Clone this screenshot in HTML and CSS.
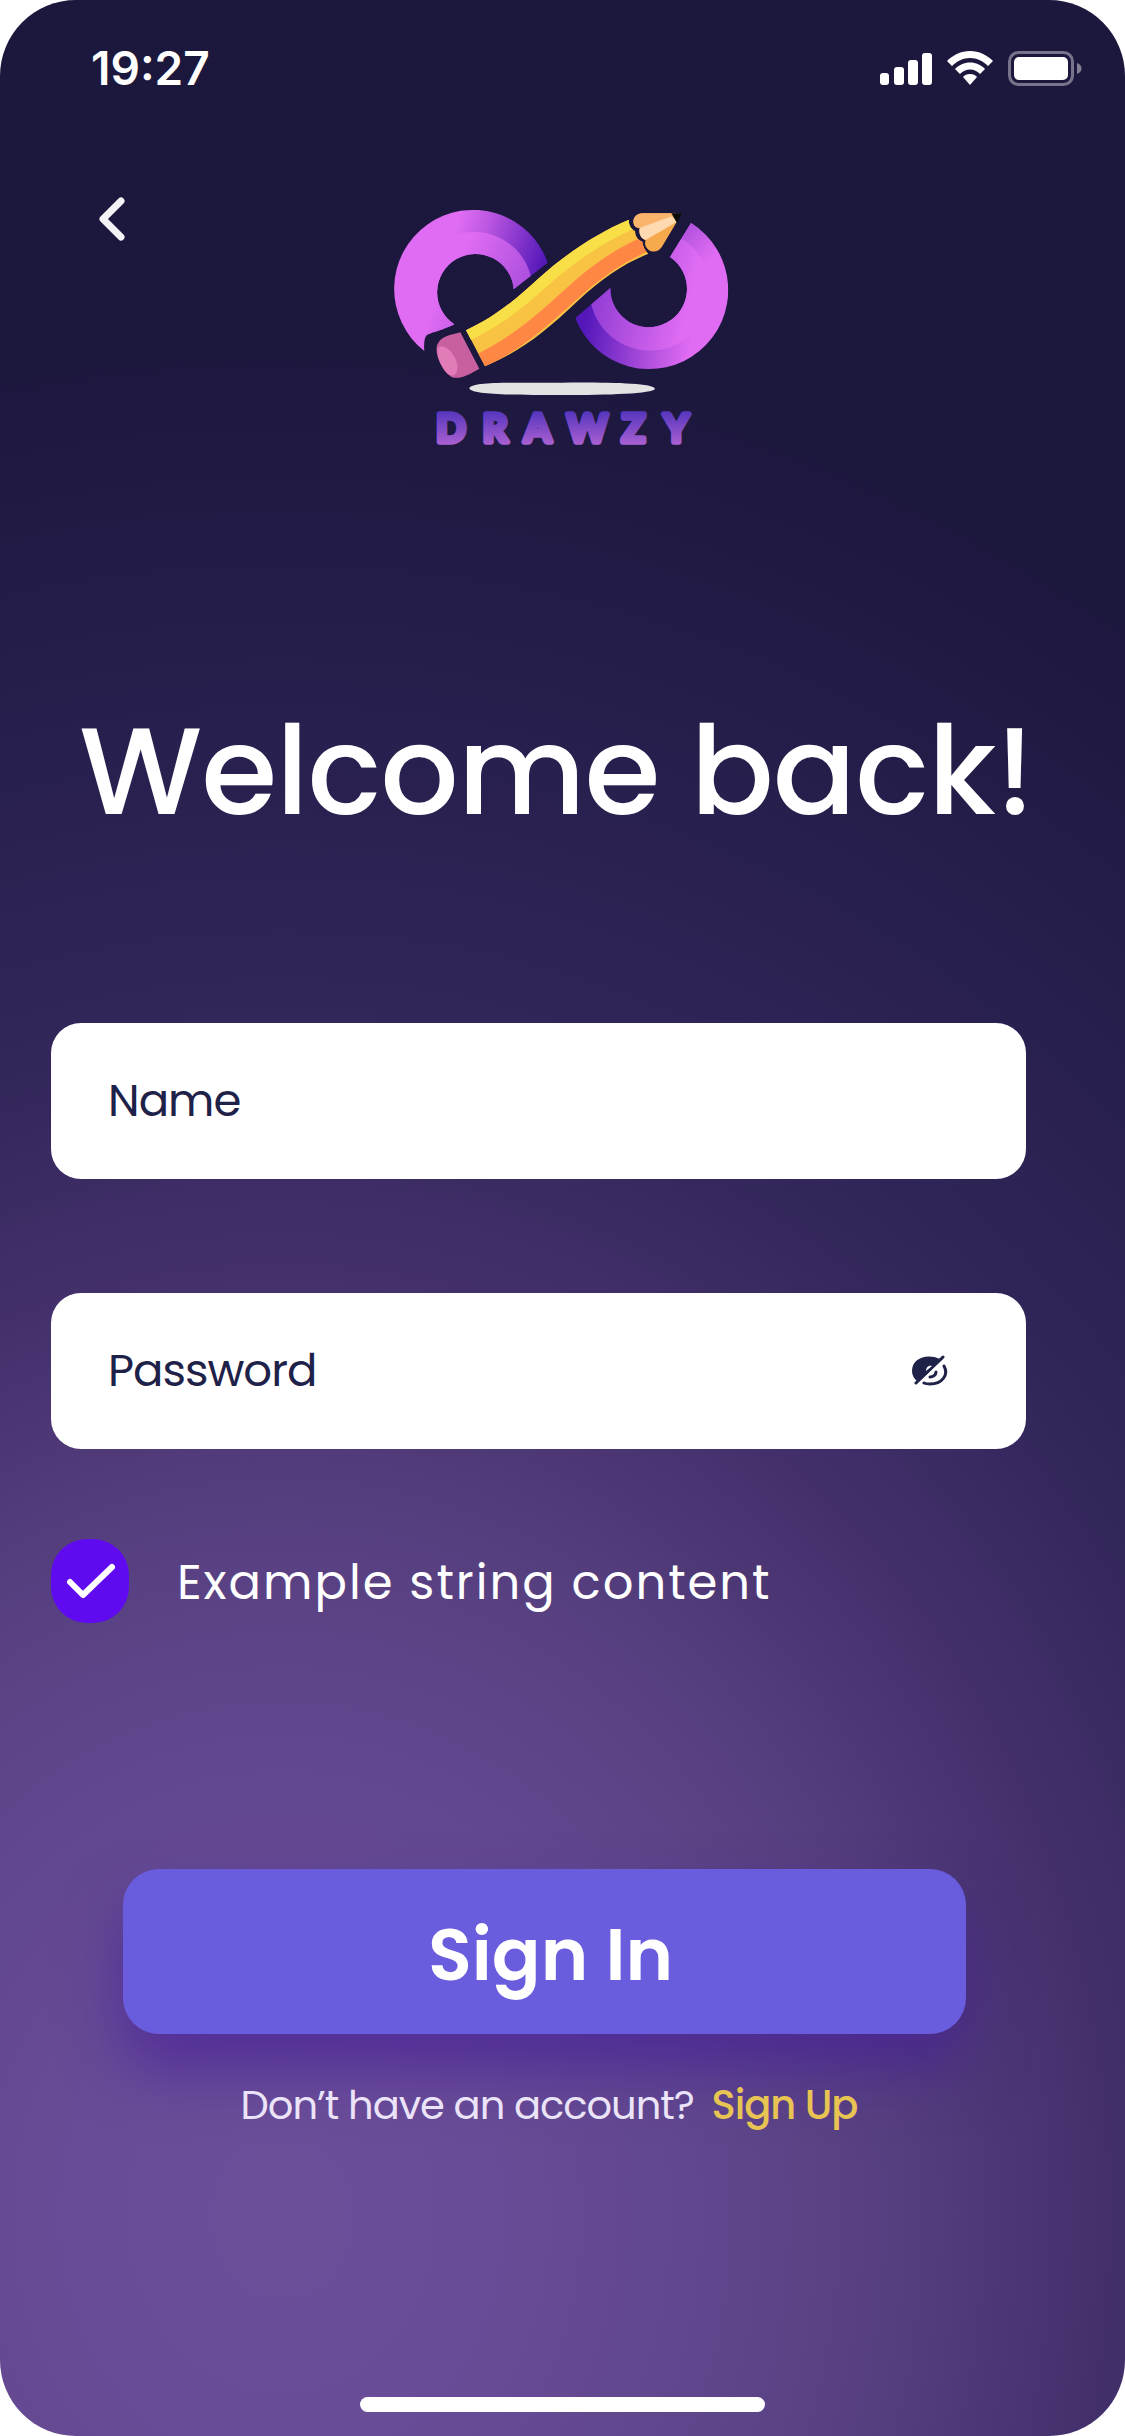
FILE: index.html
```html
<!DOCTYPE html>
<html lang="en">
<head>
<meta charset="utf-8">
<meta name="viewport" content="width=device-width, initial-scale=1">
<title>Drawzy – Sign In</title>
<link rel="stylesheet" href="styles.css">
</head>
<body>
<div class="screen">
  <div class="status">
    <time class="clock">19:27</time>
    <div class="indicators">
      <svg width="52" height="33" viewBox="0 0 52 33" fill="#fff" aria-hidden="true">
        <rect x="0" y="21" width="9" height="12" rx="3"/><rect x="14" y="15" width="10" height="18" rx="3"/><rect x="28" y="8" width="10" height="25" rx="3"/><rect x="42" y="1" width="10" height="32" rx="3"/>
      </svg>
      <svg width="46" height="34" viewBox="0 0 46 34" fill="#fff" aria-hidden="true">
        <path d="M23 0C32 0 40 4 46 10L41 15C36 10 30 7 23 7S10 10 5 15L0 10C6 4 14 0 23 0Z"/>
        <path d="M23 11.500C29 11.500 34 14 38 18L33 23C30 20 27 18.500 23 18.500S16 20 13 23L8 18C12 14 17 11.500 23 11.500Z"/>
        <path d="M23 23C26 23 28.500 24 30 26L23 34L16 26C17.500 24 20 23 23 23Z"/>
      </svg>
      <svg width="74" height="35" viewBox="0 0 74 35" aria-hidden="true">
        <rect x="1.500" y="1.500" width="63" height="32" rx="9" fill="none" stroke="#fff" stroke-opacity=".4" stroke-width="3"/>
        <rect x="6" y="6" width="54" height="23" rx="5" fill="#fff"/>
        <path d="M69 12C75 14 75 21 69 23Z" fill="#fff" fill-opacity=".45"/>
      </svg>
    </div>
  </div>

  <header class="top">
    <button class="back" type="button" aria-label="Back">
      <svg width="26" height="44" viewBox="0 0 26 44" fill="none" stroke="#f4f4f6" stroke-width="7" stroke-linecap="round" stroke-linejoin="round"><path d="M22 4L4 22L22 40"/></svg>
    </button>
    <svg class="logo" width="380" height="270" viewBox="0 0 1140 810" role="img" aria-label="Drawzy">
      <defs>
        <linearGradient id="lo" gradientUnits="userSpaceOnUse" x1="250" y1="130" x2="520" y2="210"><stop offset="0" stop-color="#e06cf3"/><stop offset=".3" stop-color="#bd58e2"/><stop offset="1" stop-color="#5518b9"/></linearGradient>
        <linearGradient id="li" gradientUnits="userSpaceOnUse" x1="290" y1="150" x2="500" y2="260"><stop offset="0" stop-color="#e06cf3"/><stop offset="1" stop-color="#a74ddb"/></linearGradient>
        <linearGradient id="ro" gradientUnits="userSpaceOnUse" x1="640" y1="400" x2="960" y2="460"><stop offset="0" stop-color="#5317ba"/><stop offset=".6" stop-color="#ab4cdb"/><stop offset="1" stop-color="#e06cf3"/></linearGradient>
        <linearGradient id="ri" gradientUnits="userSpaceOnUse" x1="680" y1="340" x2="940" y2="400"><stop offset="0" stop-color="#963fd6"/><stop offset="1" stop-color="#e06cf3"/></linearGradient>
        <linearGradient id="rt" gradientUnits="userSpaceOnUse" x1="925" y1="125" x2="1010" y2="245"><stop offset="0" stop-color="#b052de"/><stop offset="1" stop-color="#e06cf3" stop-opacity="0"/></linearGradient>
        <linearGradient id="word" gradientUnits="userSpaceOnUse" x1="0" y1="660" x2="0" y2="765"><stop offset="0" stop-color="#5435bd"/><stop offset="1" stop-color="#ad62d2"/></linearGradient>
        <clipPath id="left"><path d="M530 215A237 237 0 1 0 160 480C158 460 160 440 166 434C175 426 230 412 250 400A115 115 0 1 1 428 295Z"/></clipPath>
        <clipPath id="right"><path d="M960 96A237 237 0 1 1 613 381L718 291A115 115 0 1 0 897 198Z"/></clipPath>
        <clipPath id="pencil"><path d="M285 418C365 380 425 335 505 260C590 185 680 125 774 86C772 102 780 114 792 120C794 138 800 146 814 152C816 168 822 178 832 188C750 222 690 265 620 330C520 425 450 480 342 526Z"/></clipPath>
      </defs>
      <g clip-path="url(#left)">
        <rect x="60" y="50" width="490" height="450" fill="url(#lo)"/>
        <circle cx="310" cy="298" r="175" fill="url(#li)"/>
      </g>
      <g clip-path="url(#right)">
        <rect x="590" y="50" width="500" height="500" fill="url(#ro)"/>
        <circle cx="837" cy="298" r="181" fill="url(#ri)"/>
        <path d="M870 60H1080V300H1019A181 181 0 0 0 910 130Z" fill="url(#rt)"/>
      </g>
      <g clip-path="url(#pencil)" fill="none">
        <rect x="270" y="70" width="580" height="470" fill="#f8c243"/>
        <path d="M280 432C375 385 430 345 515 268C600 192 690 130 800 85" stroke="#f9df47" stroke-width="44"/>
        <path d="M320 514C430 462 510 392 600 310C670 245 745 190 840 152" stroke="#ff8745" stroke-width="46"/>
      </g>
      <path d="M788 98C784 80 797 67 815 67H904L932 69L914 98L872 169C862 184 841 186 830 174C821 165 821 154 824 147C808 143 803 126 806 111C796 110 789 106 788 98Z" fill="#f7a94d"/>
      <path d="M788 98C784 80 797 67 815 67H904L914 83L806 111C796 110 789 106 788 98Z" fill="#fbb46c"/>
      <path d="M806 111L902 76L918 92L824 147C808 143 803 126 806 111Z" fill="#ffd9b0"/>
      <path d="M901 67H934L918 96Z" fill="#0d0c0c"/>
      <path d="M268 424L325 533C300 548 270 564 248 560C215 550 184 478 202 455C214 434 248 430 268 424Z" fill="#c8609f"/>
      <path d="M202 468C235 455 272 519 255 547C245 560 231 552 220 537C203 510 194 485 202 468Z" fill="#e27cb9"/>
      <path d="M295 592C300 570 425 576 573 575C710 574 846 576 852 593C847 608 710 612 573 612C425 612 300 612 295 592Z" fill="#e3e3e3"/>
      <text class="wordmark" x="196 335 460 588 752 878" y="753" fill="url(#word)" stroke="url(#word)">DRAWZY</text>
    </svg>
  </header>

  <main>
    <h1>Welcome back!</h1>
    <form>
      <div class="field">
        <input type="text" placeholder="Name" aria-label="Name">
      </div>
      <div class="field">
        <input type="password" placeholder="Password" aria-label="Password">
        <button class="reveal" type="button" aria-label="Show password">
          <svg width="38" height="32" viewBox="0 0 38 32" fill="none" aria-hidden="true">
            <path d="M29 4C16-2 1 3 1 16C1 20 3 24 7 27L32 4Z" fill="#1e2148"/>
            <path d="M33 11C38 20 31 29 19 29C16 29 15 29 13 28" stroke="#1e2148" stroke-width="3" stroke-linecap="round"/>
            <path d="M25 17C25 20 22 22 19 22" stroke="#1e2148" stroke-width="3" stroke-linecap="round"/>
            <path d="M32 2L5 28" stroke="#1e2148" stroke-width="3" stroke-linecap="round"/>
            <path d="M15 16C15 11 19 10 21 11Z" fill="#fff"/>
          </svg>
        </button>
      </div>
      <label class="remember">
        <span class="tick">
          <input type="checkbox" checked>
          <svg width="50" height="36" viewBox="0 0 50 36" fill="none" stroke="#fff" stroke-width="6" stroke-linecap="round" stroke-linejoin="round" aria-hidden="true"><path d="M5 19L18 32L47 4"/></svg>
        </span>
        <span class="remember-text">Example string content</span>
      </label>
      <button class="submit" type="submit">Sign In</button>
    </form>
    <p class="signup">Don’t have an account? <a href="#signup">Sign Up</a></p>
  </main>
  <div class="home"></div>
</div>
</body>
</html>
```
FILE: styles.css
```css
* { box-sizing: border-box; }
body {
  margin: 0;
  background: #fff;
  font-family: Poppins, Inter, "Liberation Sans", sans-serif;
  color: #fff;
}
button { border: 0; padding: 0; background: none; font: inherit; color: inherit; cursor: pointer; }
svg { display: block; }
.screen {
  min-height: 100vh;
  display: flex;
  flex-direction: column;
  padding-bottom: 24px;
  border-radius: 76px;
  background: radial-gradient(147% 78% at 25% 91%, #6b4f99 0%, #694c97 12%, #5f468c 27%, #563f7f 37%, #43306b 50%, #32265a 63%, #271f4d 79%, #1c173d 100%);
}
.status {
  display: flex;
  justify-content: space-between;
  align-items: center;
  height: 136px;
  padding: 0 43px 0 91px;
}
.clock { font-family: Inter, sans-serif; font-size: 46px; font-weight: 600; line-height: 56px; }
.indicators { display: flex; align-items: center; gap: 15px; }
.top {
  display: grid;
  grid-template-columns: 1fr auto 1fr;
  align-items: start;
  padding: 55px 4px 0 0;
}
.back { justify-self: start; margin: 6px 0 0 99px; }
.logo { grid-column: 2; }
.wordmark { font-family: Lato, sans-serif; font-size: 116px; font-weight: 700; stroke-width: 16px; stroke-linejoin: round; }
h1 {
  margin: 226px 0 0;
  padding-right: 12px;
  font-size: 123px;
  font-weight: 500;
  line-height: 168px;
  letter-spacing: -1px;
  text-align: center;
  white-space: nowrap;
}
form { display: flex; flex-direction: column; padding: 168px 99px 0 51px; }
.field {
  display: flex;
  align-items: center;
  height: 156px;
  padding: 0 77px 0 57px;
  border-radius: 30px;
  background: #fff;
}
.field + .field { margin-top: 114px; }
.field input {
  flex: 1;
  min-width: 0;
  padding: 0;
  border: 0;
  outline: 0;
  background: none;
  font: inherit;
  font-size: 45px;
  line-height: 60px;
  letter-spacing: -1px;
  color: #1e2148;
}
.field input::placeholder { color: #1e2148; opacity: 1; }
.remember {
  display: flex;
  align-items: center;
  gap: 48px;
  margin-top: 90px;
  font-size: 48px;
  line-height: 60px;
  letter-spacing: 2px;
}
.remember-text { padding-top: 4px; }
.tick { display: grid; place-items: center; }
.tick > * { grid-area: 1 / 1; }
.tick input { appearance: none; width: 78px; height: 84px; margin: 0; border-radius: 36px; }
.tick input:checked { background: #600bef; }
.tick svg { position: relative; pointer-events: none; }
.submit {
  height: 165px;
  margin: 246px 60px 0 72px;
  padding: 6px 0 0 12px;
  border-radius: 36px;
  background: #6a5ddd;
  box-shadow: 0 36px 60px rgba(66, 26, 154, .6);
  font-size: 72px;
  font-weight: 600;
}
.signup {
  margin: 43px 0 60px;
  padding-right: 27px;
  font-size: 40px;
  line-height: 56px;
  letter-spacing: -1px;
  text-align: center;
  color: #ebe3f7;
}
.signup a { margin-left: 8px; font-weight: 500; color: #e8c453; text-decoration: none; }
.home { width: 36%; height: 15px; margin: auto auto 0; border-radius: 8px; background: #fff; }
```
